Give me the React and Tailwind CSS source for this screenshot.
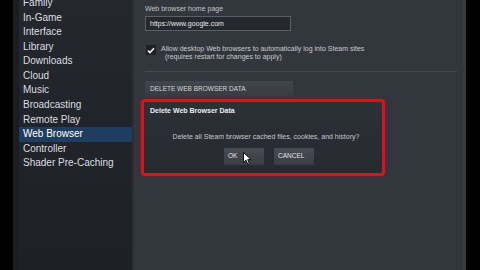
const menu = [
  "Family",
  "In-Game",
  "Interface",
  "Library",
  "Downloads",
  "Cloud",
  "Music",
  "Broadcasting",
  "Remote Play",
  "Web Browser",
  "Controller",
  "Shader Pre-Caching",
];

function Cursor() {
  return (
    <svg width="9" height="13" viewBox="0 0 9 13" className="absolute left-[243px] top-[152px]">
      <path
        d="M0.5 0.5 L0.5 10.5 L3 8.2 L4.8 12.3 L6.4 11.6 L4.7 7.6 L8 7.6 Z"
        fill="#fff"
        stroke="#000"
        strokeWidth="0.9"
        strokeLinejoin="round"
      />
    </svg>
  );
}

export default function App() {
  return (
    <div
      className="relative flex h-[270px] w-[480px] overflow-hidden bg-black"
      style={{ fontFamily: '"Liberation Sans", Arial, sans-serif' }}
    >
      <div className="w-[13px] bg-black" />

      {/* sidebar */}
      <div className="flex w-[119px] bg-[#1b1d22]">
        <div className="w-[6px]" />
        <div className="flex-1 bg-gradient-to-b from-[#24272d] to-[#1d2025]">
          <ul className="mt-[-4.4px]">
            {menu.map((item) => (
              <li
                key={item}
                className={
                  "flex h-[14.6px] items-center pl-[4px] text-[10px] leading-none " +
                  (item === "Web Browser" ? "bg-[#1f3d5e] text-white" : "text-[#dcdee1]")
                }
              >
                {item}
              </li>
            ))}
          </ul>
        </div>
      </div>

      {/* main settings */}
      <div className="relative flex-1 border-l-[2px] border-[#2a2d33] bg-[#32363d] pl-[11px] pr-[9px] text-[7px] leading-none">
        <div className="pt-[5px] text-[#c3c5c9]">Web browser home page</div>
        <div className="mt-[4px] flex h-[15px] w-[146px] items-center border border-[#5b5f67] bg-[#25282d] pl-[4px] text-[7px] text-[#e6e7e9]">
          https://www.google.com
        </div>

        <div className="mt-[14px] flex items-start">
          <div className="ml-[1px] flex h-[10px] w-[10px] items-center justify-center rounded-[1px] bg-[#1e2025]">
            <svg width="8" height="7" viewBox="0 0 8 7">
              <path d="M1 3.6 L3 5.6 L7 1.2" fill="none" stroke="#f2f2f2" strokeWidth="1.6" />
            </svg>
          </div>
          <div className="ml-[5px] text-[#c9cbcf]">
            <div className="leading-[8px]">Allow desktop Web browsers to automatically log into Steam sites</div>
            <div className="pl-[4px] leading-[8px]">(requires restart for changes to apply)</div>
          </div>
        </div>

        <div className="mt-[10px] h-px w-full bg-[#464950]" />

        <div className="mt-[9px] flex h-[16px] w-[148px] items-center bg-gradient-to-b from-[#41454c] to-[#383b42] pl-[5px] text-[6.5px] text-[#d4d6d9]">
          DELETE WEB BROWSER DATA
        </div>

        {/* dialog */}
        <div className="ml-[-4px] mt-[2px] h-[77px] w-[244px] rounded-[4px] border-[3px] border-[#d8131f] bg-gradient-to-b from-[#2c3037] to-[#272a30] shadow-[0_0_3px_#a3101a]">
          <div className="pl-[6px] pt-[5px] text-[7px] font-bold text-[#eceef0]">Delete Web Browser Data</div>
          <div className="mt-[19px] pl-[6px] text-center text-[7px] text-[#c6c8cc]">
            Delete all Steam browser cached files, cookies, and history?
          </div>
          <div className="mt-[8px] flex gap-[10px] pl-[80px]">
            <div className="flex h-[17px] w-[40px] items-center bg-gradient-to-b from-[#474b53] to-[#3a3d44] pl-[4px] text-[6.5px] text-[#e1e3e6]">
              OK
            </div>
            <div className="flex h-[17px] w-[40px] items-center bg-gradient-to-b from-[#474b53] to-[#3a3d44] pl-[4px] text-[6.5px] text-[#e1e3e6]">
              CANCEL
            </div>
          </div>
        </div>
        <div className="absolute right-0 top-0 h-full w-[3px] bg-[#383b42]" />
      </div>

      <div className="w-[14px] bg-black" />
      <Cursor />
    </div>
  );
}
